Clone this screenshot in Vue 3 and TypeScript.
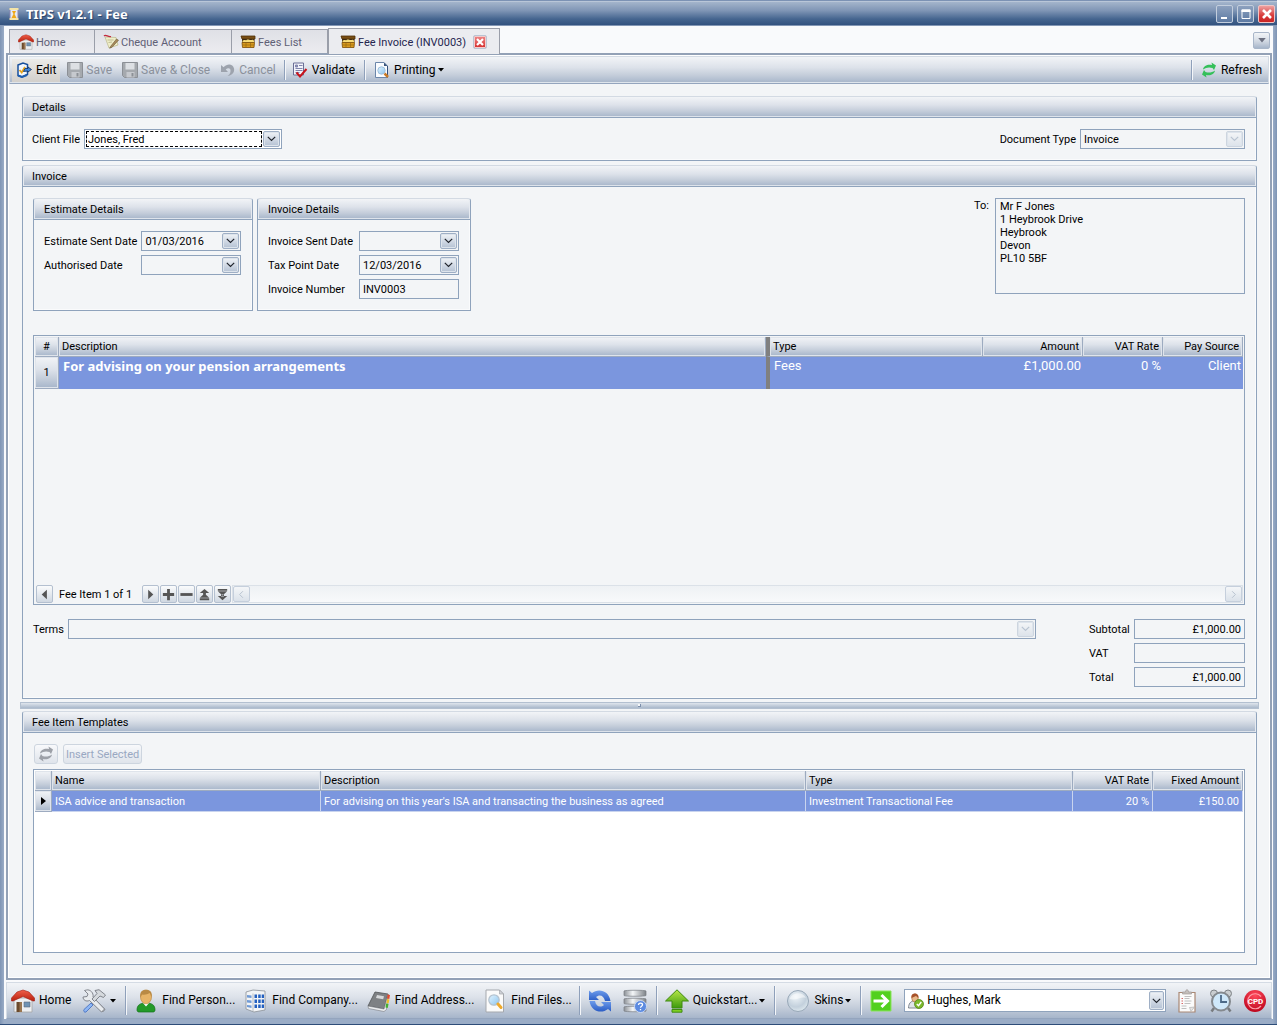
<script setup lang="ts">
import { ref } from 'vue'

interface Tab { label: string; icon: string; active?: boolean; cls: string }
interface FeeItem { description: string; type: string; amount: string; vat: string; source: string }
interface Template { name: string; description: string; type: string; vat: string; amount: string }

const tabs: Tab[] = [
  { label: 'Home', icon: 'home', cls: 'tab-home' },
  { label: 'Cheque Account', icon: 'cheque', cls: 'tab-cheque' },
  { label: 'Fees List', icon: 'chest', cls: 'tab-fees' },
  { label: 'Fee Invoice (INV0003)', icon: 'chest', active: true, cls: 'tab-invoice' },
]

const feeItems: FeeItem[] = [
  { description: 'For advising on your pension arrangements', type: 'Fees', amount: '£1,000.00', vat: '0 %', source: 'Client' },
]

const templates: Template[] = [
  {
    name: 'ISA advice and transaction',
    description: "For advising on this year's ISA and transacting the business as agreed",
    type: 'Investment Transactional Fee',
    vat: '20 %',
    amount: '£150.00',
  },
]

const finders = [
  { label: 'Find Person...', icon: 'person' },
  { label: 'Find Company...', icon: 'company' },
  { label: 'Find Address...', icon: 'address' },
  { label: 'Find Files...', icon: 'files' },
]

const navButtons = [
  { label: 'Next item', icon: 'nav-next' },
  { label: 'Add item', icon: 'nav-add' },
  { label: 'Remove item', icon: 'nav-remove' },
  { label: 'Move item up', icon: 'nav-up' },
  { label: 'Move item down', icon: 'nav-down' },
]

const clientFile = ref('Jones, Fred')
const estimateSent = ref('01/03/2016')
const authorised = ref('')
const invoiceSent = ref('')
const taxPoint = ref('12/03/2016')
const invoiceNumber = ref('INV0003')
const address = ref('Mr F Jones\n1 Heybrook Drive\nHeybrook\nDevon\nPL10 5BF')
const user = ref('Hughes, Mark')
</script>

<template>
  <div class="window">
    <svg class="sprite" width="0" height="0" aria-hidden="true">
      <defs>
        <linearGradient id="g-roof" x1="0" y1="0" x2="0" y2="1"><stop offset="0" stop-color="#f0604a" /><stop offset="1" stop-color="#b8200f" /></linearGradient>
        <linearGradient id="g-green" x1="0" y1="0" x2="0" y2="1"><stop offset="0" stop-color="#b8e84a" /><stop offset="1" stop-color="#3c9a0c" /></linearGradient>
        <linearGradient id="g-blue" x1="0" y1="0" x2="0" y2="1"><stop offset="0" stop-color="#6d9cec" /><stop offset="1" stop-color="#2a5cc4" /></linearGradient>
        <linearGradient id="g-metal" x1="0" y1="0" x2="1" y2="0"><stop offset="0" stop-color="#8b9096" /><stop offset=".4" stop-color="#f4f6f8" /><stop offset="1" stop-color="#7d8288" /></linearGradient>
        <linearGradient id="g-lens" x1="0" y1="0" x2="1" y2="1"><stop offset="0" stop-color="#e2f4ff" /><stop offset="1" stop-color="#8cc4ee" /></linearGradient>
        <radialGradient id="g-orb" cx=".4" cy=".3" r=".8"><stop offset="0" stop-color="#eef4f8" /><stop offset=".6" stop-color="#c3d0dc" /><stop offset="1" stop-color="#e6f0f4" /></radialGradient>
        <radialGradient id="g-red" cx=".5" cy=".25" r=".8"><stop offset="0" stop-color="#ff4a5c" /><stop offset="1" stop-color="#b80018" /></radialGradient>
      </defs>
      <symbol id="home" viewBox="0 0 24 24">
        <path d="M3 9h18v14H3z" fill="#eef0f2" stroke="#a4a4a4" stroke-width=".8" />
        <path d="M5.500 13h5.500v10H5.500z" fill="#6b4a2c" /><path d="M8.500 13H11v10H8.500z" fill="#9a7650" />
        <path d="M13 13h6v5h-6z" fill="#6f93b4" stroke="#5a6a7a" stroke-width=".6" />
        <path d="M6 3 12 1l6 2 5.500 6v3h-1.500L12 7.500 2 12H.5V9z" fill="url(#g-roof)" stroke="#a01c10" stroke-width=".6" />
      </symbol>
      <symbol id="cheque" viewBox="0 0 16 16">
        <path d="M2 3 13 3.500l2 7.500-9 3z" fill="#efedc8" stroke="#b9b68a" stroke-width=".7" />
        <path d="M1 2c2-2 4 1.500 7 .5" fill="none" stroke="#c22a3c" stroke-width="1.300" />
        <path d="m4.500 6 6 0M5.500 8.500 9 8" stroke="#a9a77c" stroke-width=".7" />
        <path d="m7.500 12.500 6-7.500 2 1.200-6.500 7-2.300 1z" fill="#a88a5c" stroke="#6c5a38" stroke-width=".6" />
      </symbol>
      <symbol id="chest" viewBox="0 0 16 16">
        <path d="M1 2h14v3H2z" fill="#7a4f14" stroke="#4f3008" stroke-width=".8" />
        <path d="M2 5h12.500v3.500H2z" fill="#3f2a10" />
        <path d="M2.500 7c2-2 3 0 4-1s3 0 4 0 3-1 3.500 1v1.500H2.500z" fill="#f7dc78" />
        <path d="M2 8.500h12.500l-.5 5H2.500z" fill="#d99a1e" stroke="#7a4d08" stroke-width=".8" />
        <path d="M6 9v4M10.500 9v4M2.500 11h11.500" stroke="#9a6a10" stroke-width=".7" />
      </symbol>
      <symbol id="edit" viewBox="0 0 16 16">
        <path d="M2 3 7 1l4.500 1.500v10L6 15l-4-1.500z" fill="#f2f7fd" stroke="#174f9c" stroke-width="1.500" />
        <path d="M2 13.500 6 15l5-2" fill="none" stroke="#1d5db0" stroke-width="2" />
        <path d="m3.500 8 2.200 2.500L9 5" fill="none" stroke="#e8a51c" stroke-width="1.800" />
        <path d="m7.500 9.500 1.500-3h3V5l3.500 2.500L12 10v-1z" fill="#3f86dc" stroke="#12305e" stroke-width=".8" />
      </symbol>
      <symbol id="save" viewBox="0 0 16 16">
        <path d="M.5.500h15v15h-13l-2-2z" fill="#a5a9ae" stroke="#8c9096" />
        <path d="M3.500 1h9v6.500h-9z" fill="#dde0e4" /><path d="M4.500 10h8v5.500h-8z" fill="#c6c9ce" /><path d="M9.500 11h2v3.500h-2z" fill="#8c9096" />
      </symbol>
      <symbol id="undo" viewBox="0 0 16 16">
        <path d="M1 3v7h7L5.700 7.500C8 5.500 11 6 10.500 9.500c-.2 2-1.500 3.500-3 4.500 5-.6 7.300-4 6.500-7.500C13 2 7.500 1 3.600 5.300z" fill="#9da3ad" />
      </symbol>
      <symbol id="validate" viewBox="0 0 16 16">
        <path d="M1.500 1h10v12h-10z" fill="#f2f3fa" stroke="#6b6f96" />
        <path d="M3.500 3h2v2h-2zM7 3.500h3.500M3.500 6.500h7M3.500 8.500h7M3.500 10.500h4" fill="#8c8fb8" stroke="#8185ac" />
        <path d="m4.500 10.500 3.500 4 6.500-7.500" fill="none" stroke="#c8141c" stroke-width="2" />
      </symbol>
      <symbol id="preview" viewBox="0 0 16 16">
        <path d="M1.500.5h8.500l3.500 3.500v11.500h-12z" fill="#fafcff" stroke="#6b86aa" /><path d="M10 .5V4h3.500z" fill="#3b567e" /><path d="M13.500 4v11.500" stroke="#33507c" />
        <circle cx="7.500" cy="8.500" r="3.700" fill="url(#g-lens)" stroke="#9fc0dc" /><path d="m10.500 11.500 3.500 3.500" stroke="#c97a26" stroke-width="2.500" />
      </symbol>
      <symbol id="swap" viewBox="0 0 16 16">
        <path d="M2 7.500C2.500 4 6.500 2 11 3l-.5-2.500L15 3.500 13 8l-1.500-2C8 4.800 5 5.500 2 7.500z" fill="currentColor" />
        <path d="M14 8.500c-.5 3.500-4.500 5.500-9 4.500l.5 2.500L1 12.500 3 8l1.500 2c3.500 1.200 6.500.5 9.500-1.500z" fill="currentColor" />
      </symbol>
      <symbol id="tools" viewBox="0 0 24 24">
        <path d="m20.500 23-12-12.500 2-2L23 20.500z" fill="#dfe2e6" stroke="#74787e" />
        <path d="M2.500 1.500 6 5 5 7.500 1 8c0 3 3 5 6.500 3.500L19.500 23l3-3L11 8C12 4 8 0 4.500 1z" fill="#e8ebee" stroke="#777b82" stroke-width=".9" />
        <path d="M2 20.500 9 14l2 2-7 7c-1.500.8-3-.9-2-2.500z" fill="#8db6f4" stroke="#4b74c2" stroke-width=".9" />
        <path d="M12.500 12.500 18 7l3.500 1.500L23.500 6 17 .7l-4 .8 2 3-5 5.500z" fill="#d5d9dd" stroke="#777b82" stroke-width=".9" />
      </symbol>
      <symbol id="person" viewBox="0 0 24 24">
        <path d="M3 21c0-5 3-7 9-7s9 2 9 7c0 1.500-1 2-2 2H5c-1 0-2-.5-2-2z" fill="#239a28" stroke="#12701a" stroke-width=".7" />
        <path d="m9 14 3 3.500 3-3.500z" fill="#fff" />
        <ellipse cx="12" cy="8" rx="5.500" ry="6.800" fill="#e7b467" stroke="#b98238" stroke-width=".6" />
        <path d="M6.400 8.500C5.500 3 8 .8 12 .8s6.600 2.200 5.700 7.700C17 6.500 16.500 5 15.500 4c-2 1.500-5 2-7.500 1.500z" fill="#b98a44" />
      </symbol>
      <symbol id="company" viewBox="0 0 24 24">
        <path d="M2 3 9 1l12 1v19l-11 2-8-3z" fill="#f2f4f6" stroke="#8a9098" stroke-width=".8" />
        <path d="M9 4.500V22" stroke="#b9bec6" />
        <path d="M10.500 5.500H13V9h-2.500zm3.700 0h2.500V9h-2.500zm3.500 0H20V9h-2.300zM10.500 10.500H13V14h-2.500zm3.700 0h2.500V14h-2.500zm3.500 0H20V14h-2.300zM10.500 15.500H13V19h-2.500zm3.700 0h2.500V19h-2.500zm3.500 0H20V19h-2.300z" fill="#2360c0" />
        <path d="m3 6 4.500.5v2.500L3 8.500zm0 5 4.500.5V14L3 13.500zm0 5 4.500.5V19L3 18z" fill="#6f9ad6" />
      </symbol>
      <symbol id="address" viewBox="0 0 24 24">
        <path d="M8 3 21 5l-4 15L1 17z" fill="#7e8184" stroke="#505356" stroke-width=".8" />
        <path d="M1 17l.5 2.500L17 22.500l2.500-2L21 5l-4 15z" fill="#eceef0" stroke="#77797d" stroke-width=".6" />
        <path d="m10 6 7 1.200-.8 3L9 9z" fill="#d6d8da" />
        <path d="m20.500 5.500 2.500.5-.7 4-2.200-.6z" fill="#e2482c" /><path d="m20 10 2.400.5-.8 4-2.200-.6z" fill="#f0c026" /><path d="m19 14.500 2.500.5-.8 4-2.200-.6z" fill="#44b030" />
      </symbol>
      <symbol id="files" viewBox="0 0 24 24">
        <path d="M3 1h13.500l4 4v18H3z" fill="#fafafa" stroke="#a5a8ad" /><path d="M16.500 1v4h4z" fill="#d0d3d8" stroke="#a5a8ad" stroke-width=".7" />
        <circle cx="11" cy="11" r="5.200" fill="url(#g-lens)" stroke="#b4c2cf" stroke-width="1.300" /><path d="m15 15 3 3.500" stroke="#efaa2c" stroke-width="3" stroke-linecap="round" />
      </symbol>
      <symbol id="sync" viewBox="0 0 24 24">
        <path d="M1 1.500 4 4C10-1 21 1 22.500 12H17C16 6.500 11.500 4.800 8 8l3 3H1z" fill="url(#g-blue)" />
        <path d="M23 22.500 20 20C14 25 3 23 1.500 12H7c1 5.500 5.500 7.200 9 4l-3-3h10z" fill="url(#g-blue)" />
      </symbol>
      <symbol id="database" viewBox="0 0 24 24">
        <path d="M1 2c0-1 22-1 22 0v4.500c0 1-22 1-22 0zM1 10c0-1 22-1 22 0v4.500c0 1-22 1-22 0zM1 18c0-1 22-1 22 0v4c0 1-22 1-22 0z" fill="url(#g-metal)" stroke="#797d83" stroke-width=".7" />
        <circle cx="17.500" cy="17.500" r="6" fill="#5d8be0" stroke="#dbe6fa" stroke-width=".8" />
        <path d="M15.500 16c0-2.700 4-2.500 4-.2 0 1.500-2 1.400-2 3M17.500 20v1.300" fill="none" stroke="#fff" stroke-width="1.300" />
      </symbol>
      <symbol id="quick" viewBox="0 0 24 24">
        <path d="M12 .8 23.500 12H17v7H7v-7H.5z" fill="url(#g-green)" stroke="#3f8a10" /><path d="M7 20.500h10v2.700H7z" fill="#7fd022" stroke="#3f8a10" />
      </symbol>
      <symbol id="go" viewBox="0 0 24 24">
        <path d="M2 2h20v20H2z" fill="#52d01e" stroke="#8ae45c" /><path d="M4.500 12H18M12.500 6l6 6-6 6" fill="none" stroke="#fff" stroke-width="3" />
      </symbol>
      <symbol id="member" viewBox="0 0 16 16">
        <path d="M.5 15c0-4 2-7 5.500-7s5.500 3 5.500 7z" fill="#dfe4ea" stroke="#68707a" stroke-width=".8" /><ellipse cx="7" cy="5" rx="3.300" ry="4" fill="#e9b98a" stroke="#a86a38" stroke-width=".6" />
        <path d="M3.500 5C3 1.500 5 .5 7 .5S11 2 10.300 5L8 3z" fill="#a8522a" /><circle cx="11" cy="11" r="4.500" fill="#7cb82c" stroke="#4a7c12" stroke-width=".7" />
        <path d="m8.800 11 1.700 1.700L13.300 9" fill="none" stroke="#fff" stroke-width="1.400" />
      </symbol>
      <symbol id="clipboard" viewBox="0 0 24 24">
        <path d="M4 3.500h16V23H4z" fill="#fbfbfb" stroke="#a98874" stroke-width="1.200" /><path d="M7.500 5V3h3c0-3 3-3 3 0h3v2z" fill="#c4bfbc" stroke="#a09a97" stroke-width=".7" />
        <path d="M6.500 9.500H8M6.500 12h1.500M6.500 14.500h1.500" stroke="#d86a6a" /><path d="M9.500 7.500h7M9.500 9.500h5M9.500 12h7M9.500 14.500h6M6.500 17h5M6.500 19.500h5" stroke="#c0c0c0" />
        <path d="m19.500 18-5 .5 1.500 4z" fill="#e4e4e4" stroke="#a9a9a9" stroke-width=".6" />
      </symbol>
      <symbol id="clock" viewBox="0 0 24 24">
        <path d="m5 19-2.500 3.500M19 19l2.500 3.500" stroke="#777b7f" stroke-width="2.500" /><circle cx="5" cy="4.500" r="3.500" fill="#c9cdd0" stroke="#7e8286" /><circle cx="19" cy="4.500" r="3.500" fill="#c9cdd0" stroke="#7e8286" />
        <circle cx="12" cy="12.500" r="9" fill="#cfe8fa" stroke="#84898e" stroke-width="2" /><path d="M12 6v7h6" fill="none" stroke="#4c6a88" stroke-width="1.800" />
      </symbol>
      <symbol id="chevron" viewBox="0 0 9 6"><path d="m.8.800 3.700 3.700L8.200.8" fill="none" stroke="currentColor" stroke-width="1.200" /></symbol>
      <symbol id="caret" viewBox="0 0 6 4"><path d="M0 0h6L3 3.500z" fill="currentColor" /></symbol>
      <symbol id="nav-prev" viewBox="0 0 16 16"><path d="M10.500 3v10L5 8z" fill="currentColor" /></symbol>
      <symbol id="nav-next" viewBox="0 0 16 16"><path d="M5.500 3v10L11 8z" fill="currentColor" /></symbol>
      <symbol id="nav-add" viewBox="0 0 16 16"><path d="M6.500 2h3v4.500H14v3H9.500V14h-3V9.500H2v-3h4.500z" fill="currentColor" /></symbol>
      <symbol id="nav-remove" viewBox="0 0 16 16"><path d="M1.500 6.500h13v3h-13z" fill="currentColor" /></symbol>
      <symbol id="nav-up" viewBox="0 0 16 16"><path d="m8 2 5 4.500H3zM6.500 6h3v2h-3zM8 7l5 4.500H3zM3 12h10v2H3z" fill="currentColor" /></symbol>
      <symbol id="nav-down" viewBox="0 0 16 16"><path d="m8 14 5-4.500H3zM6.500 8h3v2h-3zM8 9l5-4.500H3zM3 2h10v2H3z" fill="currentColor" /></symbol>
    </svg>

    <header class="titlebar">
      <svg class="i14" viewBox="0 0 14 14">
        <path d="M2.500 1h9v2h-9zM2.500 11h9v2h-9z" fill="#f4e4a8" /><path d="M3 3h8v8H3z" fill="#e4e9f2" /><path d="M5 4h4L7.500 7 9.500 11h-5l2-4z" fill="#f0a818" /><path d="M3 3v8M11 3v8" stroke="#8a86b0" />
      </svg>
      <h1>TIPS v1.2.1 - Fee</h1>
      <div class="winbtns">
        <button type="button" aria-label="Minimise"><svg viewBox="0 0 14 14"><path d="M3 10h6v2H3z" fill="#fff" /></svg></button>
        <button type="button" aria-label="Maximise"><svg viewBox="0 0 14 14"><path d="M3 3h8v8.500H3z" fill="none" stroke="#fff" /><path d="M2.500 2.500h9V5h-9z" fill="#fff" /></svg></button>
        <button type="button" class="close" aria-label="Close"><svg viewBox="0 0 14 14"><path d="m3 3 8 8m0-8-8 8" stroke="#fff" stroke-width="2.600" /></svg></button>
      </div>
    </header>

    <div class="client">
      <nav class="tabs">
        <div v-for="tab in tabs" :key="tab.label" class="tab" :class="[tab.cls, { active: tab.active }]">
          <button type="button" class="tab-label"><svg class="i16"><use :href="'#' + tab.icon" /></svg>{{ tab.label }}</button>
          <button v-if="tab.active" type="button" class="tab-close" aria-label="Close tab"><svg viewBox="0 0 12 12"><path d="m3 3 6 6m0-6L3 9" stroke="#fff" stroke-width="2.200" /></svg></button>
        </div>
        <button type="button" class="tab-menu" aria-label="Tab list"><svg width="8" height="5"><use href="#caret" /></svg></button>
      </nav>

      <main class="page">
        <div class="toolbar">
          <button type="button" class="tool hot"><svg class="i16"><use href="#edit" /></svg>Edit</button>
          <button type="button" class="tool" disabled><svg class="i16"><use href="#save" /></svg>Save</button>
          <button type="button" class="tool" disabled><svg class="i16"><use href="#save" /></svg>Save &amp; Close</button>
          <button type="button" class="tool" disabled><svg class="i16"><use href="#undo" /></svg>Cancel</button>
          <span class="sep"></span>
          <button type="button" class="tool"><svg class="i16"><use href="#validate" /></svg>Validate</button>
          <span class="sep"></span>
          <button type="button" class="tool printing"><svg class="i16"><use href="#preview" /></svg>Printing<svg class="drop"><use href="#caret" /></svg></button>
          <span class="sep push"></span>
          <button type="button" class="tool refresh"><svg class="i16 green"><use href="#swap" /></svg>Refresh</button>
        </div>

        <div class="content">
          <section class="group details">
            <h2>Details</h2>
            <div class="details-body">
              <div class="field">
                <label for="client">Client File</label>
                <div class="combo client-combo">
                  <select id="client" v-model="clientFile"><option>Jones, Fred</option></select>
                  <span class="dd"><svg><use href="#chevron" /></svg></span>
                </div>
              </div>
              <div class="field">
                <label for="doctype">Document Type</label>
                <div class="combo doc-combo off">
                  <select id="doctype" disabled><option>Invoice</option></select>
                  <span class="dd"><svg><use href="#chevron" /></svg></span>
                </div>
              </div>
            </div>
          </section>

          <section class="group invoice">
            <h2>Invoice</h2>
            <div class="invoice-body">
              <div class="top-row">
                <section class="group sub estimate">
                  <h2>Estimate Details</h2>
                  <div class="form">
                    <label for="est">Estimate Sent Date</label>
                    <div class="combo"><input id="est" v-model="estimateSent" type="text" /><button type="button" class="dd" aria-label="Pick date"><svg><use href="#chevron" /></svg></button></div>
                    <label for="auth">Authorised Date</label>
                    <div class="combo"><input id="auth" v-model="authorised" type="text" /><button type="button" class="dd" aria-label="Pick date"><svg><use href="#chevron" /></svg></button></div>
                  </div>
                </section>
                <section class="group sub inv-details">
                  <h2>Invoice Details</h2>
                  <div class="form">
                    <label for="sent">Invoice Sent Date</label>
                    <div class="combo"><input id="sent" v-model="invoiceSent" type="text" /><button type="button" class="dd" aria-label="Pick date"><svg><use href="#chevron" /></svg></button></div>
                    <label for="tax">Tax Point Date</label>
                    <div class="combo"><input id="tax" v-model="taxPoint" type="text" /><button type="button" class="dd" aria-label="Pick date"><svg><use href="#chevron" /></svg></button></div>
                    <label for="num">Invoice Number</label>
                    <div class="combo"><input id="num" v-model="invoiceNumber" type="text" /></div>
                  </div>
                </section>
                <div class="to">
                  <label for="to">To:</label>
                  <textarea id="to" v-model="address" readonly></textarea>
                </div>
              </div>

              <div class="grid items">
                <table>
                  <colgroup><col class="c-num" /><col /><col class="c-type" /><col class="c-amount" /><col class="c-vat" /><col class="c-source" /></colgroup>
                  <thead>
                    <tr><th class="mid">#</th><th>Description</th><th class="split">Type</th><th class="num">Amount</th><th class="num">VAT Rate</th><th class="num">Pay Source</th></tr>
                  </thead>
                  <tbody>
                    <tr v-for="(item, i) in feeItems" :key="i">
                      <th scope="row" class="mid">{{ i + 1 }}</th>
                      <td class="strong">{{ item.description }}</td>
                      <td class="split">{{ item.type }}</td>
                      <td class="num">{{ item.amount }}</td>
                      <td class="num">{{ item.vat }}</td>
                      <td class="num">{{ item.source }}</td>
                    </tr>
                  </tbody>
                </table>
                <div class="navigator">
                  <button type="button" class="nb" aria-label="Previous item"><svg><use href="#nav-prev" /></svg></button>
                  <span class="pos">Fee Item 1 of 1</span>
                  <button v-for="b in navButtons" :key="b.icon" type="button" class="nb" :aria-label="b.label"><svg><use :href="'#' + b.icon" /></svg></button>
                  <div class="hscroll">
                    <span class="nb end"><svg viewBox="0 0 16 16"><path d="M9.500 4.500 6 8l3.500 3.500" fill="none" stroke="currentColor" /></svg></span>
                    <span class="nb end"><svg viewBox="0 0 16 16"><path d="M6.500 4.500 10 8l-3.500 3.500" fill="none" stroke="currentColor" /></svg></span>
                  </div>
                </div>
              </div>

              <div class="bottom-row">
                <div class="field terms">
                  <label for="terms">Terms</label>
                  <div class="combo off"><select id="terms" disabled><option></option></select><span class="dd"><svg><use href="#chevron" /></svg></span></div>
                </div>
                <div class="form totals">
                  <label for="subtotal">Subtotal</label><div class="combo"><input id="subtotal" type="text" value="£1,000.00" readonly /></div>
                  <label for="vat">VAT</label><div class="combo"><input id="vat" type="text" value="" readonly /></div>
                  <label for="total">Total</label><div class="combo"><input id="total" type="text" value="£1,000.00" readonly /></div>
                </div>
              </div>
            </div>
          </section>

          <div class="splitter"><span></span></div>

          <section class="group templates">
            <h2>Fee Item Templates</h2>
            <div class="templates-body">
              <div class="actions">
                <button type="button" class="soft icon" disabled aria-label="Reload templates"><svg class="i16"><use href="#swap" /></svg></button>
                <button type="button" class="soft" disabled>Insert Selected</button>
              </div>
              <div class="grid list">
                <table>
                  <colgroup><col class="c-mark" /><col class="c-name" /><col /><col class="c-ttype" /><col class="c-vat" /><col class="c-fixed" /></colgroup>
                  <thead>
                    <tr><th></th><th>Name</th><th>Description</th><th>Type</th><th class="num">VAT Rate</th><th class="num">Fixed Amount</th></tr>
                  </thead>
                  <tbody>
                    <tr v-for="t in templates" :key="t.name">
                      <th scope="row" class="mark"><svg width="5" height="8" viewBox="0 0 5 8"><path d="M0 0v8l5-4z" /></svg></th>
                      <td>{{ t.name }}</td><td>{{ t.description }}</td><td>{{ t.type }}</td>
                      <td class="num">{{ t.vat }}</td><td class="num">{{ t.amount }}</td>
                    </tr>
                  </tbody>
                </table>
              </div>
            </div>
          </section>
        </div>
      </main>

      <footer class="dock">
        <button type="button" class="big"><svg class="i24"><use href="#home" /></svg>Home</button>
        <button type="button" class="big tools" aria-label="Tools"><svg class="i24"><use href="#tools" /></svg><svg class="drop"><use href="#caret" /></svg></button>
        <span class="sep"></span>
        <button v-for="f in finders" :key="f.icon" type="button" class="big finder"><svg class="i24"><use :href="'#' + f.icon" /></svg>{{ f.label }}</button>
        <span class="sep"></span>
        <button type="button" class="big" aria-label="Synchronise"><svg class="i24"><use href="#sync" /></svg></button>
        <button type="button" class="big" aria-label="Data query"><svg class="i24"><use href="#database" /></svg></button>
        <span class="sep"></span>
        <button type="button" class="big"><svg class="i24"><use href="#quick" /></svg>Quickstart...<svg class="drop"><use href="#caret" /></svg></button>
        <span class="sep"></span>
        <button type="button" class="big skins"><svg class="i24" viewBox="0 0 24 24"><circle cx="12" cy="12" r="10.500" fill="url(#g-orb)" stroke="#98a8b8" /><path d="M3.500 10C6 3 17 2 20 9c-5-2-9 3-16.500 1z" fill="#fff" opacity=".5" /></svg>Skins<svg class="drop"><use href="#caret" /></svg></button>
        <span class="sep"></span>
        <button type="button" class="big" aria-label="Go"><svg class="i24"><use href="#go" /></svg></button>
        <div class="combo user">
          <svg class="i16"><use href="#member" /></svg>
          <select v-model="user" aria-label="User"><option>Hughes, Mark</option></select>
          <span class="dd"><svg><use href="#chevron" /></svg></span>
        </div>
        <button type="button" class="big tail" aria-label="Tasks"><svg class="i24"><use href="#clipboard" /></svg></button>
        <button type="button" class="big tail" aria-label="Reminders"><svg class="i24"><use href="#clock" /></svg></button>
        <button type="button" class="big tail" aria-label="CPD">
          <svg class="i24" viewBox="0 0 24 24"><circle cx="12" cy="12" r="11" fill="url(#g-red)" /><path d="M18 7.500A7.500 7.500 0 1 0 18 17" fill="none" stroke="#ff9aa4" stroke-width="1.200" /><text x="12.500" y="15" text-anchor="middle" class="cpd">CPD</text></svg>
        </button>
      </footer>
    </div>
  </div>
</template>

<style>
body { background: #fff; }
</style>

<style scoped>
* { box-sizing: border-box; }
.window {
  --line: #8fa3bc;
  --bar: linear-gradient(#f2f4f7 0%, #dde2ea 40%, #c4cdda 70%, #a6b5ca 100%);
  min-height: 100vh;
  display: flex;
  flex-direction: column;
  padding: 0 4px 5px;
  background: linear-gradient(90deg, #7e94b4, #9aacc6 4px, #9aacc6 calc(100% - 4px), #7e94b4);
  border-bottom: 1px solid #2d4c78;
  font-family: Roboto, "Liberation Sans", sans-serif;
  font-size: 11px;
  line-height: 13px;
  color: #000;
}
.sprite { position: absolute; }
button { font: inherit; color: inherit; border: 0; margin: 0; padding: 0; background: none; display: flex; align-items: center; }
input, select, textarea { font: inherit; color: #000; background: none; border: 0; margin: 0; padding: 0; outline: 0; border-radius: 0; min-width: 0; }
select { appearance: none; opacity: 1; }
h1, h2 { margin: 0; font-weight: normal; }
svg { display: block; flex: none; }
.i14 { width: 14px; height: 14px; }
.i16 { width: 16px; height: 16px; }
.i24 { width: 24px; height: 24px; }

.titlebar {
  height: 26px;
  margin: 0 -4px;
  padding: 2px 2px 0 7px;
  display: flex;
  align-items: center;
  background: linear-gradient(#a8b8ce, #7f95b5 40%, #45658f 75%, #33527f);
  border-top: 1px solid #7c92b4;
  border-bottom: 1px solid #8397b5;
  box-shadow: inset 0 1px #b9c6d8;
  color: #fff;
}
.titlebar h1 { font: bold 13px/16px "Noto Sans", sans-serif; margin-left: 5px; text-shadow: 1px 1px 1px #24406a; }
.winbtns { margin-left: auto; display: flex; gap: 4px; }
.winbtns button { width: 17px; height: 18px; justify-content: center; border: 1px solid #c3cedd; border-radius: 2px; background: linear-gradient(#8da1be, #5d7aa3); }
.winbtns svg { width: 14px; height: 14px; }
.winbtns .close { background: linear-gradient(#eda0a0, #d83a3a 60%, #c92424); border-color: #f0c4c4; }

.client { flex: 1; display: flex; flex-direction: column; background: #f9fafc; padding: 2px 1px 0 2px; }

.tabs { display: flex; align-items: flex-end; padding: 0 2px 0 3px; }
.tab { height: 24px; display: flex; align-items: center; border: 1px solid #9a9ea9; border-left-width: 0; border-bottom: 0; background: linear-gradient(#dfe0e6, #ececf0); color: #5f6076; padding: 1px 8px 0; }
.tab:first-child { border-left-width: 1px; }
.tab-home { width: 86px; }
.tab-cheque { width: 137px; }
.tab-fees { width: 96px; }
.tab.active { width: 172px; height: 26px; padding-left: 11px; margin-bottom: -1px; border-left-width: 1px; background: #ebecf0; color: #25264f; position: relative; }
.tab-label { gap: 2px; white-space: nowrap; }
.tab-close { margin-left: auto; margin-right: 4px; width: 14px; height: 14px; border: 1px solid #b9c4d3; border-radius: 2px; background: linear-gradient(#ee8a8a, #d42c2c); justify-content: center; box-shadow: inset 0 0 0 1px #f3caca; }
.tab-close svg { width: 12px; height: 12px; }
.tab-menu { margin: 0 0 4px auto; width: 17px; height: 17px; justify-content: center; border: 1px solid #a9b6c9; border-radius: 2px; background: var(--bar); color: #6c7080; }

.page { flex: 1; display: flex; flex-direction: column; border: 2px solid #93a1b6; background: #f3f5f7; box-shadow: inset 0 0 0 1px #fff; padding: 1px; }
.toolbar { height: 28px; display: flex; align-items: center; padding: 0 2px; border: 1px solid #d4dbe4; border-bottom-color: #94a5be; background: var(--bar); box-shadow: inset 0 -1px #dfe5ec; font-size: 12px; }
.tool { height: 23px; padding: 0 4px; gap: 4px; margin-right: 3px; white-space: nowrap; }
.tool.hot { background: linear-gradient(#ecebe8, #d2cfcb); }
.tool:disabled { color: #8b919c; gap: 3px; margin-right: 2px; }
.sep { width: 2px; align-self: stretch; margin: 3px 2px; border-left: 1px solid #8fa0ba; border-right: 1px solid #f4f6f9; }
.push { margin-left: auto; }
.printing { margin-left: 2px; }
.toolbar .refresh { margin: 0 0 0 2px; }
.drop { width: 6px; height: 4px; margin-left: 1px; }
.printing .drop { margin-left: -1px; }
.green { color: #35c05a; }

.content { flex: 1; display: flex; flex-direction: column; padding: 12px 12px 12px 13px; }
.group { display: flex; flex-direction: column; border: 1px solid var(--line); border-top-color: #d3dae3; border-radius: 3px 3px 0 0; box-shadow: inset -1px -1px #fafbfc; }
.group > h2 { height: 21px; padding: 0 9px; font-size: 11px; line-height: 21px; background: var(--bar); border-bottom: 1px solid var(--line); box-shadow: inset 1px 0 #e6eaf0, inset -1px 0 #e6eaf0, inset 0 -1px #dde3eb; border-radius: 3px 3px 0 0; }
.group.sub > h2 { padding: 0 10px; }

.details-body { display: flex; justify-content: space-between; padding: 11px 11px 11px 9px; }
.field { display: flex; gap: 4px; }
label { height: 20px; line-height: 22px; white-space: nowrap; }
.combo { height: 20px; display: flex; align-items: center; border: 1px solid var(--line); padding: 1px; }
.combo input, .combo select { flex: 1; height: 16px; padding: 0 2px; }
.dd { width: 17px; height: 16px; flex: none; display: flex; align-items: center; justify-content: center; border: 1px solid #9fafc5; border-radius: 2px; background: linear-gradient(#f0f3f7, #b4c1d3); box-shadow: inset 0 0 0 1px #dde4ec; margin-left: 1px; color: #20242c; }
.dd svg { width: 9px; height: 6px; }
.off .dd { background: linear-gradient(#f4f6f8, #dde3ea); border-color: #cdd5df; color: #b9c4d2; }
.off select:disabled { color: #000; opacity: 1; }
.client-combo { width: 198px; background: #fff; }
.client-combo select { border: 1px dashed #000; padding: 0 1px; }
.doc-combo { width: 165px; }

.invoice { margin-top: 4px; flex: 1; }
.invoice-body { flex: 1; display: flex; flex-direction: column; padding: 11px 11px 11px 10px; }
.top-row { display: flex; align-items: stretch; gap: 4px; }
.sub { min-height: 113px; }
.estimate { width: 220px; }
.inv-details { width: 214px; }
.form { display: grid; grid-template-columns: 1fr 100px; gap: 4px; padding: 11px 11px 11px 10px; }
.to { margin-left: auto; display: flex; gap: 6px; }
.to label { line-height: 15px; }
.to textarea { width: 250px; height: 96px; padding: 1px 4px; border: 1px solid var(--line); resize: none; line-height: 13px; }

.grid { border: 1px solid var(--line); padding: 1px; display: flex; flex-direction: column; }
.items { margin-top: 24px; flex: 1; min-height: 150px; }
table { width: 100%; table-layout: fixed; border-collapse: separate; border-spacing: 0; }
th { font-weight: normal; text-align: left; background: var(--bar); border-right: 1px solid #9dabc0; border-bottom: 1px solid #9dabc0; box-shadow: inset 0 0 0 1px #dfe4eb; padding: 0 3px; height: 20px; white-space: nowrap; }
td { background: #7b96de; color: #fff; padding: 0 3px; white-space: nowrap; overflow: hidden; }
.num { text-align: right; }
.mid { text-align: center; }
.items tbody td { height: 32px; vertical-align: top; padding: 1px 2px 1px 4px; font-size: 13px; line-height: 16px; }
.items .strong { font-family: "Noto Sans", sans-serif; font-weight: bold; }
.items .split { border-left: 4px solid #808080; }
.c-num { width: 24px; }
.c-type { width: 217px; }
.c-amount { width: 100px; }
.c-vat { width: 80px; }
.c-source { width: 80px; }
.c-mark { width: 17px; }
.c-name { width: 269px; }
.c-ttype { width: 267px; }
.c-fixed { width: 90px; }

.navigator { margin-top: auto; display: flex; align-items: center; gap: 1px; padding-left: 1px; }
.nb { width: 17px; height: 18px; flex: none; display: flex; align-items: center; justify-content: center; border: 1px solid #b4c0d0; border-radius: 2px; background: linear-gradient(#fafbfc, #d0d8e2); color: #555; }
.nb svg { width: 15px; height: 15px; }
.pos { padding: 0 9px 0 5px; }
.hscroll { flex: 1; display: flex; justify-content: space-between; border: 1px solid #dbe1e8; background: linear-gradient(#eef1f4, #f8f9fb); }
.hscroll .end { height: 16px; border-color: #c5cfdc; color: #b4bfcd; background: linear-gradient(#f4f6f8, #dbe2ea); }

.bottom-row { margin-top: 14px; display: flex; align-items: flex-start; justify-content: space-between; gap: 53px; }
.terms { flex: 1; }
.terms .combo { flex: 1; }
.totals { grid-template-columns: 41px 111px; padding: 0; }
.totals input { text-align: right; }

.splitter { height: 7px; margin: 3px -2px 2px; border: 1px solid #b3c0d0; background: linear-gradient(#dfe5ec, #a9b8cb); display: flex; justify-content: center; align-items: center; }
.splitter span { width: 3px; height: 3px; background: #f4f6f8; border: 1px solid #7d90ac; border-width: 0 1px 1px 0; }

.templates-body { padding: 11px 11px 11px 10px; display: flex; flex-direction: column; }
.actions { display: flex; gap: 5px; margin: 0 1px 5px; }
.soft { height: 20px; padding: 0 2px; border: 1px solid #cdd5df; border-radius: 3px; background: linear-gradient(#f8f9fb, #dfe4eb); color: #99a8c2; font-size: 11px; white-space: nowrap; }
.soft.icon { width: 24px; justify-content: center; color: #9da1a8; }
.list { height: 184px; background: #fff; }
.list tbody td { height: 21px; border-right: 1px solid #c9d4ee; border-bottom: 1px solid #c9d4ee; }
.mark svg { margin: 0 auto; }

.dock { height: 37px; margin-top: 2px; display: flex; align-items: center; padding: 0 4px; border: 1px solid #d4dbe4; border-bottom-color: #94a5be; background: var(--bar); font-size: 12px; }
.big { height: 30px; gap: 4px; margin-right: 11px; white-space: nowrap; }
.big .drop { margin-left: -2px; }
.tools .drop { margin-left: 0; }
.finder { margin-right: 9px; }
.skins { margin-left: 3px; }
.dock .sep { margin: 3px 7px 3px -2px; }
.user { flex: 1; height: 23px; background: #fff; margin-right: 9px; }
.user .i16 { margin-left: 2px; }
.user select { padding: 0 3px; }
.user .dd { width: 15px; height: 19px; }
.tail { margin-right: 10px; }
.tail:last-child { margin-right: 0; }
.cpd { font: bold 8px Roboto, sans-serif; fill: #fff; }
</style>
